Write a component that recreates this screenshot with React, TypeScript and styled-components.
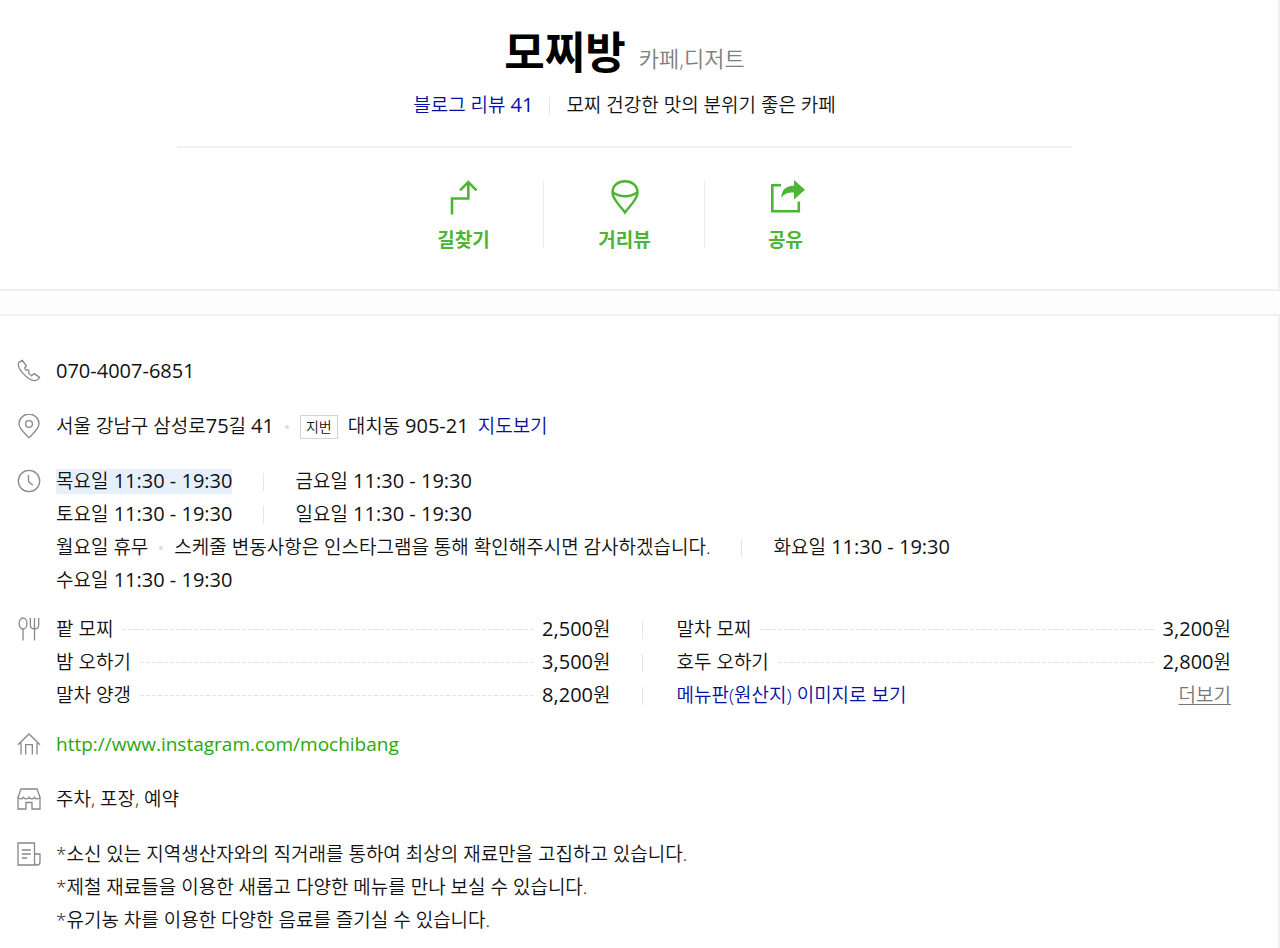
import React from "react";
import styled, { createGlobalStyle, css } from "styled-components";

const GlobalStyle = createGlobalStyle`
  * { box-sizing: border-box; }
  body {
    margin: 0;
    background: #fdfdfd;
    color: #111;
    font-family: "Open Sans", "Noto Sans CJK KR", sans-serif;
    font-size: 19px;
    font-weight: 350;
    line-height: 33px;
  }
  h1, p, ul, dl, dd { margin: 0; padding: 0; }
  ul { list-style: none; }
  svg { display: block; }
`;

const Page = styled.div`
  display: flex;
  flex-direction: column;
  gap: 23px;
`;

const Panel = styled.section`
  background: #fff;
  border: 2px solid #f0f0f0;
  border-left: 0;
`;

const HeaderPanel = styled(Panel)`
  border-top: 0;
  padding: 20px 29px 33px 0;
`;

const HeaderInner = styled.header`
  width: 72%;
  max-width: 895px;
  margin: 0 auto;
  display: flex;
  flex-direction: column;
  align-items: center;
`;

const TitleRow = styled.div`
  display: flex;
  align-items: center;
  gap: 13px;
`;

const Title = styled.h1`
  font-size: 44px;
  font-weight: 700;
  line-height: 64px;
  color: #000;
`;

const Category = styled.span`
  padding-top: 12px;
  font-size: 22px;
  color: #808080;
`;

const Summary = styled.div`
  display: flex;
  align-items: center;
  margin-top: 5px;
`;

const Figures = styled.span`
  font-size: 20px;
  font-weight: 400;
  line-height: 1;
`;

const Divider = styled.span<{ $space?: number }>`
  flex: none;
  width: 1px;
  height: 18px;
  margin: 0 ${(p) => p.$space ?? 31}px;
  background: #e4e6e8;
`;

const Link = styled.a<{ $tone?: "blue" | "green" | "gray" }>`
  text-decoration: none;
  color: #000f9f;
  ${(p) =>
    p.$tone === "green" &&
    css`
      color: #2ba70f;
      font-weight: 400;
    `}
  ${(p) =>
    p.$tone === "gray" &&
    css`
      color: #777;
      text-decoration: underline;
      text-underline-offset: 2px;
    `}
`;

const Actions = styled.div`
  align-self: stretch;
  display: flex;
  justify-content: center;
  margin-top: 24px;
  padding-top: 32px;
  border-top: 2px solid #f0f0f0;
`;

const ActionButton = styled.button`
  width: 161px;
  height: 76px;
  padding: 0;
  border: 0;
  background: linear-gradient(#eceeee, #eceeee) right top / 1px 68px no-repeat;
  color: #4cb534;
  font: inherit;
  font-weight: 700;
  line-height: 28px;
  display: flex;
  flex-direction: column;
  align-items: center;
  gap: 10px;
  cursor: pointer;
  &:last-child { background: none; }
`;

const InfoPanel = styled(Panel)`
  border-bottom: 0;
  padding: 39px 47px 10px 17px;
`;

const InfoList = styled.dl`
  display: flex;
  flex-direction: column;
`;

const InfoRow = styled.div<{ $tight?: boolean }>`
  display: flex;
  align-items: flex-start;
  gap: 15px;
  margin-bottom: ${(p) => (p.$tight ? 16 : 22)}px;
`;

const IconCell = styled.dt`
  flex: none;
  width: 24px;
  height: 31px;
  display: flex;
  align-items: center;
  color: #888;
`;

const Detail = styled.dd`
  flex: 1;
  min-width: 0;
`;

const Line = styled.div`
  display: flex;
  align-items: center;
  flex-wrap: wrap;
`;

const Today = styled.strong`
  margin: 4px 0;
  font-weight: inherit;
  line-height: 25px;
  background: #e6f0fd;
`;

const Dot = styled.span`
  width: 4px;
  height: 4px;
  margin: 0 11px;
  border-radius: 50%;
  background: #dcdcdc;
`;

const Badge = styled.span`
  padding: 0 5px;
  margin-right: 10px;
  border: 1px solid #d4d4d4;
  font-size: 14px;
  line-height: 22px;
`;

const MapLink = styled(Link)`
  margin-left: 9px;
`;

const MenuGrid = styled.div`
  display: grid;
  grid-template-columns: minmax(0, 1fr) 66px minmax(0, 1fr);
  align-items: center;
`;

const MenuItem = styled.div`
  display: flex;
  align-items: center;
  justify-content: space-between;
  white-space: nowrap;
`;

const Leader = styled.span`
  flex: 1;
  height: 1px;
  margin: 0 9px;
  background: repeating-linear-gradient(90deg, #dfe2e6 0 4px, transparent 4px 6px);
`;

const svgProps = {
  width: 24,
  height: 24,
  viewBox: "0 0 24 24",
  fill: "none",
  stroke: "currentColor",
  strokeWidth: 1.3,
  "aria-hidden": true,
} as const;

const PhoneIcon = () => (
  <svg {...svgProps} strokeLinejoin="round">
    <path d="M5.2 1.2 1.700 3.600C.9 5.400 2 9.600 5.400 13.700 9.200 18.300 14.300 21.900 18.300 21.700c1.500-.1 2.800-1 4.300-3.300L17.300 14.600l-2.700 2.200C13.600 16 12.500 15 11.500 13.800L12 11.900 10.800 10.800 8.900 11C8.300 10.300 7.900 9.700 7.600 9L9.300 7Z" />
  </svg>
);

const PinIcon = () => (
  <svg {...svgProps}>
    <path d="M12 24C9.500 20.500 2 15.500 2 9.800a10 9.700 0 0 1 20 0C22 15.500 14.500 20.500 12 24Z" />
    <circle cx="12" cy="10" r="3.400" />
  </svg>
);

const ClockIcon = () => (
  <svg {...svgProps}>
    <circle cx="12" cy="12" r="10.700" />
    <path d="M11.500 6v6.500l4.300 3.800" />
  </svg>
);

const CutleryIcon = () => (
  <svg {...svgProps}>
    <ellipse cx="6" cy="6.500" rx="3.900" ry="5.500" />
    <path d="M6 12v11.500M13.300 1v6.500c0 3 1.500 4.500 4.200 4.500s4.200-1.500 4.200-4.500V1M17.500 1v22.500" />
  </svg>
);

const HouseIcon = () => (
  <svg {...svgProps}>
    <path d="M1 12.800 12 2l11 10.800M4 11v11.500M20 11v11.500M8.700 22.500V12.600h6.600v9.900" />
  </svg>
);

const StoreIcon = () => (
  <svg {...svgProps}>
    <path d="M4 2h16l3 8.300V22H15v-6.500H9V22H1V10.300Z" />
    <path d="M1 10.300c1.200 2.200 4.200 2.200 5.500 0 1.300 2.200 4.200 2.200 5.500 0 1.300 2.200 4.200 2.200 5.500 0 1.300 2.200 4.300 2.200 5.500 0" />
  </svg>
);

const NoteIcon = () => (
  <svg {...svgProps}>
    <path d="M20 23H1V1h16.500v19.500c0 1.500 1 2.500 2.500 2.500 2 0 3-1 3-3v-8h-5.500M4.800 8h9M4.800 12h9M4.800 16h5.500" />
  </svg>
);

const RouteIcon = () => (
  <svg width="36" height="36" viewBox="0 0 36 36" fill="none" stroke="currentColor" strokeWidth="2.600" aria-hidden>
    <path d="M6 34.500V18.500h16.300V2M14 10.300 22.300 2l8.200 8.300" />
  </svg>
);

const StreetIcon = () => (
  <svg width="36" height="36" viewBox="0 0 36 36" fill="none" stroke="currentColor" strokeWidth="2.400" aria-hidden>
    <path d="M18 32.500C14.500 27 5.500 20 5.500 12.500 5.500 5.500 11 1.200 18 1.200s12.500 4.300 12.500 11.300C30.500 20 21.500 27 18 32.500Z" />
    <path d="M5.600 12.300c6.500 5.200 18.300 5.200 24.800 0" />
  </svg>
);

const ShareIcon = () => (
  <svg width="38" height="36" viewBox="0 0 38 36" fill="none" stroke="currentColor" strokeWidth="2.600" aria-hidden>
    <path d="M14 5.300H5.300v26h26.500V21.500" />
    <path d="M27 0v5.800C18 6 14.500 10.500 14.300 18c3-4.500 6.500-5.600 12.700-5.600V19.500l11-9.700Z" fill="currentColor" stroke="none" />
  </svg>
);

const Hours = ({ day }: { day: string }) => (
  <>
    {day}
    <Figures> 11:30 - 19:30</Figures>
  </>
);

const Price = ({ name, amount }: { name: string; amount: string }) => (
  <MenuItem>
    <span>{name}</span>
    <Leader />
    <span>
      <Figures>{amount}</Figures>원
    </span>
  </MenuItem>
);

export default function App() {
  return (
    <>
      <GlobalStyle />
      <Page>
        <HeaderPanel>
          <HeaderInner>
            <TitleRow>
              <Title>모찌방</Title>
              <Category>카페,디저트</Category>
            </TitleRow>
            <Summary>
              <Link href="#reviews">
                블로그 리뷰 <Figures>41</Figures>
              </Link>
              <Divider $space={16} />
              <p>모찌 건강한 맛의 분위기 좋은 카페</p>
            </Summary>
            <Actions>
              <ActionButton type="button">
                <RouteIcon />
                길찾기
              </ActionButton>
              <ActionButton type="button">
                <StreetIcon />
                거리뷰
              </ActionButton>
              <ActionButton type="button">
                <ShareIcon />
                공유
              </ActionButton>
            </Actions>
          </HeaderInner>
        </HeaderPanel>

        <InfoPanel>
          <InfoList>
            <InfoRow>
              <IconCell><PhoneIcon /></IconCell>
              <Detail><Figures>070-4007-6851</Figures></Detail>
            </InfoRow>
            <InfoRow>
              <IconCell><PinIcon /></IconCell>
              <Detail>
                <Line>
                  <span>
                    서울 강남구 삼성로<Figures>75</Figures>길 <Figures>41</Figures>
                  </span>
                  <Dot />
                  <Badge>지번</Badge>
                  <span>
                    대치동 <Figures>905-21</Figures>
                  </span>
                  <MapLink href="#map">지도보기</MapLink>
                </Line>
              </Detail>
            </InfoRow>
            <InfoRow $tight>
              <IconCell><ClockIcon /></IconCell>
              <Detail>
                <Line>
                  <Today><Hours day="목요일" /></Today>
                  <Divider />
                  <span><Hours day="금요일" /></span>
                </Line>
                <Line>
                  <span><Hours day="토요일" /></span>
                  <Divider />
                  <span><Hours day="일요일" /></span>
                </Line>
                <Line>
                  <span>월요일 휴무</span>
                  <Dot />
                  <span>스케줄 변동사항은 인스타그램을 통해 확인해주시면 감사하겠습니다.</span>
                  <Divider />
                  <span><Hours day="화요일" /></span>
                </Line>
                <Line>
                  <span><Hours day="수요일" /></span>
                </Line>
              </Detail>
            </InfoRow>
            <InfoRow $tight>
              <IconCell><CutleryIcon /></IconCell>
              <Detail>
                <MenuGrid>
                  <Price name="팥 모찌" amount="2,500" />
                  <Divider />
                  <Price name="말차 모찌" amount="3,200" />
                  <Price name="밤 오하기" amount="3,500" />
                  <Divider />
                  <Price name="호두 오하기" amount="2,800" />
                  <Price name="말차 양갱" amount="8,200" />
                  <Divider />
                  <MenuItem>
                    <Link href="#menu">메뉴판(원산지) 이미지로 보기</Link>
                    <Link href="#more" $tone="gray">더보기</Link>
                  </MenuItem>
                </MenuGrid>
              </Detail>
            </InfoRow>
            <InfoRow>
              <IconCell><HouseIcon /></IconCell>
              <Detail>
                <Link href="http://www.instagram.com/mochibang" $tone="green">
                  http://www.instagram.com/mochibang
                </Link>
              </Detail>
            </InfoRow>
            <InfoRow>
              <IconCell><StoreIcon /></IconCell>
              <Detail>주차, 포장, 예약</Detail>
            </InfoRow>
            <InfoRow $tight>
              <IconCell><NoteIcon /></IconCell>
              <Detail>
                <p>*소신 있는 지역생산자와의 직거래를 통하여 최상의 재료만을 고집하고 있습니다.</p>
                <p>*제철 재료들을 이용한 새롭고 다양한 메뉴를 만나 보실 수 있습니다.</p>
                <p>*유기농 차를 이용한 다양한 음료를 즐기실 수 있습니다.</p>
              </Detail>
            </InfoRow>
          </InfoList>
        </InfoPanel>
      </Page>
    </>
  );
}
